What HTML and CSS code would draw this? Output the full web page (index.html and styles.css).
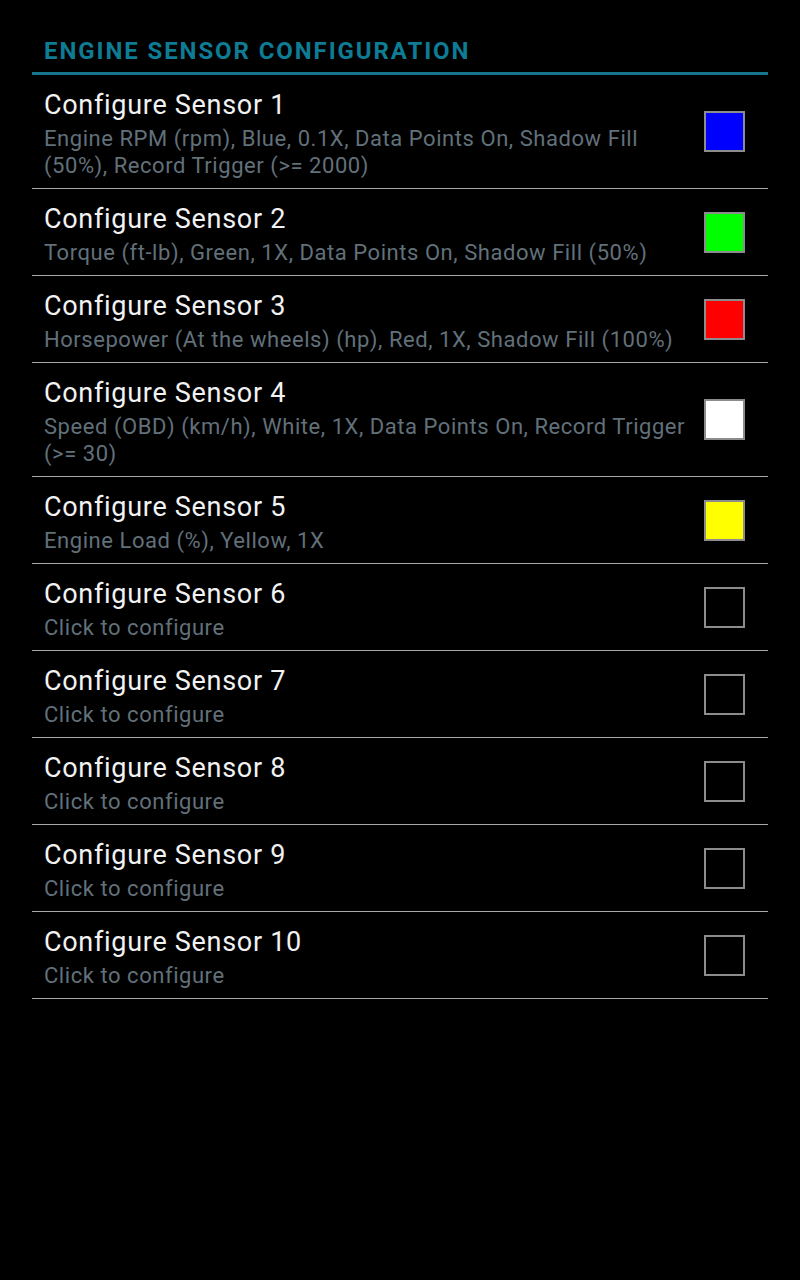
FILE: index.html
```html
<!DOCTYPE html>
<html>
<head>
<meta charset="utf-8">
<link rel="stylesheet" href="styles.css">
</head>
<body>
<div class="screen">
  <div class="header">ENGINE SENSOR CONFIGURATION</div>
  <ul class="list">
    <li class="row">
      <div class="text">
        <div class="title">Configure Sensor 1</div>
        <div class="summary">Engine RPM (rpm), Blue, 0.1X, Data Points On, Shadow Fill (50%), Record Trigger (&gt;= 2000)</div>
      </div>
      <div class="swatch blue"></div>
    </li>
    <li class="row">
      <div class="text">
        <div class="title">Configure Sensor 2</div>
        <div class="summary">Torque (ft-lb), Green, 1X, Data Points On, Shadow Fill (50%)</div>
      </div>
      <div class="swatch green"></div>
    </li>
    <li class="row">
      <div class="text">
        <div class="title">Configure Sensor 3</div>
        <div class="summary">Horsepower (At the wheels) (hp), Red, 1X, Shadow Fill (100%)</div>
      </div>
      <div class="swatch red"></div>
    </li>
    <li class="row">
      <div class="text">
        <div class="title">Configure Sensor 4</div>
        <div class="summary">Speed (OBD) (km/h), White, 1X, Data Points On, Record Trigger (&gt;= 30)</div>
      </div>
      <div class="swatch white"></div>
    </li>
    <li class="row">
      <div class="text">
        <div class="title">Configure Sensor 5</div>
        <div class="summary">Engine Load (%), Yellow, 1X</div>
      </div>
      <div class="swatch yellow"></div>
    </li>
    <li class="row">
      <div class="text">
        <div class="title">Configure Sensor 6</div>
        <div class="summary">Click to configure</div>
      </div>
      <div class="swatch"></div>
    </li>
    <li class="row">
      <div class="text">
        <div class="title">Configure Sensor 7</div>
        <div class="summary">Click to configure</div>
      </div>
      <div class="swatch"></div>
    </li>
    <li class="row">
      <div class="text">
        <div class="title">Configure Sensor 8</div>
        <div class="summary">Click to configure</div>
      </div>
      <div class="swatch"></div>
    </li>
    <li class="row">
      <div class="text">
        <div class="title">Configure Sensor 9</div>
        <div class="summary">Click to configure</div>
      </div>
      <div class="swatch"></div>
    </li>
    <li class="row">
      <div class="text">
        <div class="title">Configure Sensor 10</div>
        <div class="summary">Click to configure</div>
      </div>
      <div class="swatch"></div>
    </li>
  </ul>
</div>
</body>
</html>
```
FILE: styles.css
```css
html, body {
  margin: 0;
  padding: 0;
  background: #000;
}
body {
  font-family: Roboto, "Noto Sans", sans-serif;
  width: 800px;
  height: 1280px;
}
.screen {
  padding: 0 32px;
}
.header {
  padding: 38px 12px 8px;
  font-size: 24px;
  line-height: 26px;
  font-weight: bold;
  letter-spacing: 1.9px;
  color: #0e7c95;
  border-bottom: 3px solid #14758c;
}
.list {
  list-style: none;
  margin: 0;
  padding: 0;
}
.row {
  display: flex;
  align-items: center;
  padding: 14px 23px 9px 12px;
  border-bottom: 1px solid #a8a8a8;
}
.text {
  flex: 1;
  min-width: 0;
}
.title {
  font-size: 27px;
  line-height: 32px;
  letter-spacing: 0.7px;
  color: #f2f2f2;
}
.summary {
  margin-top: 4px;
  font-size: 22px;
  line-height: 27px;
  letter-spacing: 0.55px;
  color: #62707a;
}
.swatch {
  width: 37px;
  height: 37px;
  border: 2px solid #8c8c8c;
  margin-left: 12px;
  margin-top: -5px;
  flex: none;
}
.blue { background: #0000ff; }
.green { background: #00ff00; }
.red { background: #ff0000; }
.white { background: #ffffff; }
.yellow { background: #ffff00; }
```
